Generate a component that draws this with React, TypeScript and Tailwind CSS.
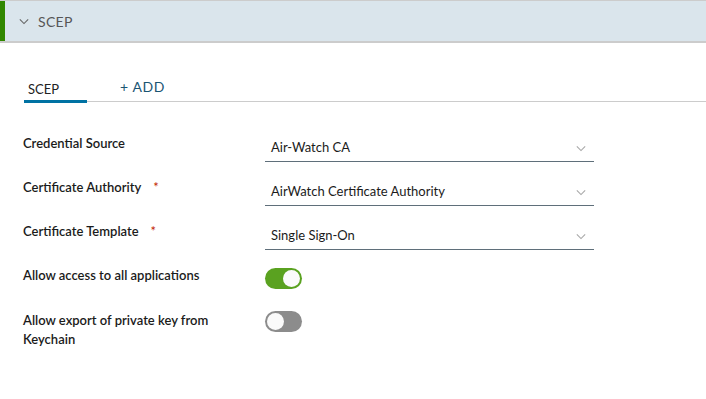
import React from "react";

function Chevron({ className }: { className?: string }) {
  return (
    <svg viewBox="0 0 12 8" className={className} fill="none" stroke="currentColor" strokeWidth="1.3">
      <path d="M1 1.5 L6 6.5 L11 1.5" />
    </svg>
  );
}

function SelectRow({ label, value, required }: { label: string; value: string; required?: boolean }) {
  return (
    <div className="flex items-start h-[44px]">
      <div className="w-[242px] pt-[8px] text-[13px] font-semibold text-[#1b1b1b]">
        {label}
        {required && <span className="ml-[12px] text-[#c21d00] font-normal">*</span>}
      </div>
      <div className="w-[329px] h-[36px] flex items-end justify-between pb-[4px] pl-[6px] pr-[8px] border-b border-[#5f6f7a] text-[13px] text-[#1b1b1b]">
        <span>{value}</span>
        <Chevron className="w-[10px] h-[7px] mb-[5px] text-[#a8a8a8]" />
      </div>
    </div>
  );
}

function Toggle({ on }: { on?: boolean }) {
  return (
    <div
      className={
        on
          ? "shrink-0 w-[37px] h-[21px] rounded-full bg-[#5aa220] flex items-center justify-end px-[2px]"
          : "shrink-0 w-[37px] h-[21px] rounded-full bg-[#8c8c8c] flex items-center justify-start px-[2px]"
      }
    >
      <div className="w-[17px] h-[17px] rounded-full bg-[#fafafa]" />
    </div>
  );
}

export default function App() {
  return (
    <div className="w-[706px] h-[399px] bg-white" style={{ fontFamily: "Lato, 'Noto Sans', sans-serif" }}>
      {/* header */}
      <div className="h-[43px] flex items-center bg-[#dae5ec] border-t border-b-2 border-[#cccccc]">
        <div className="w-[5px] self-stretch bg-[#318700]" />
        <Chevron className="ml-[14px] w-[10px] h-[7px] text-[#666666]" />
        <span className="ml-[9px] text-[14px] text-[#565656] tracking-[0.3px]">SCEP</span>
      </div>

      {/* tabs */}
      <div className="mt-[33px] ml-[24px] flex items-end border-b border-[#cccccc] h-[26px]">
        <div className="w-[63px] h-full flex items-start pl-[4px] pt-[2px] border-b-[3px] border-[#0072a3] -mb-[2px] text-[13px] text-[#222222]">
          SCEP
        </div>
        <div className="ml-[33px] h-full -mt-[1px] text-[14px] text-[#1a5573] tracking-[0.6px]">+ ADD</div>
      </div>

      {/* form */}
      <div className="mt-[24px] ml-[23px] flex flex-col">
        <SelectRow label="Credential Source" value="Air-Watch CA" />
        <SelectRow label="Certificate Authority" value="AirWatch Certificate Authority" required />
        <SelectRow label="Certificate Template" value="Single Sign-On" required />

        <div className="flex items-start mt-[10px]">
          <div className="w-[242px] text-[13px] font-semibold text-[#1b1b1b] leading-[20px] -mt-[3px]">
            Allow access to all applications
          </div>
          <Toggle on />
        </div>

        <div className="flex items-start mt-[22px]">
          <div className="w-[242px] text-[13px] font-semibold text-[#1b1b1b] leading-[19px] pr-[40px]">
            Allow export of private key from Keychain
          </div>
          <Toggle />
        </div>
      </div>
    </div>
  );
}
